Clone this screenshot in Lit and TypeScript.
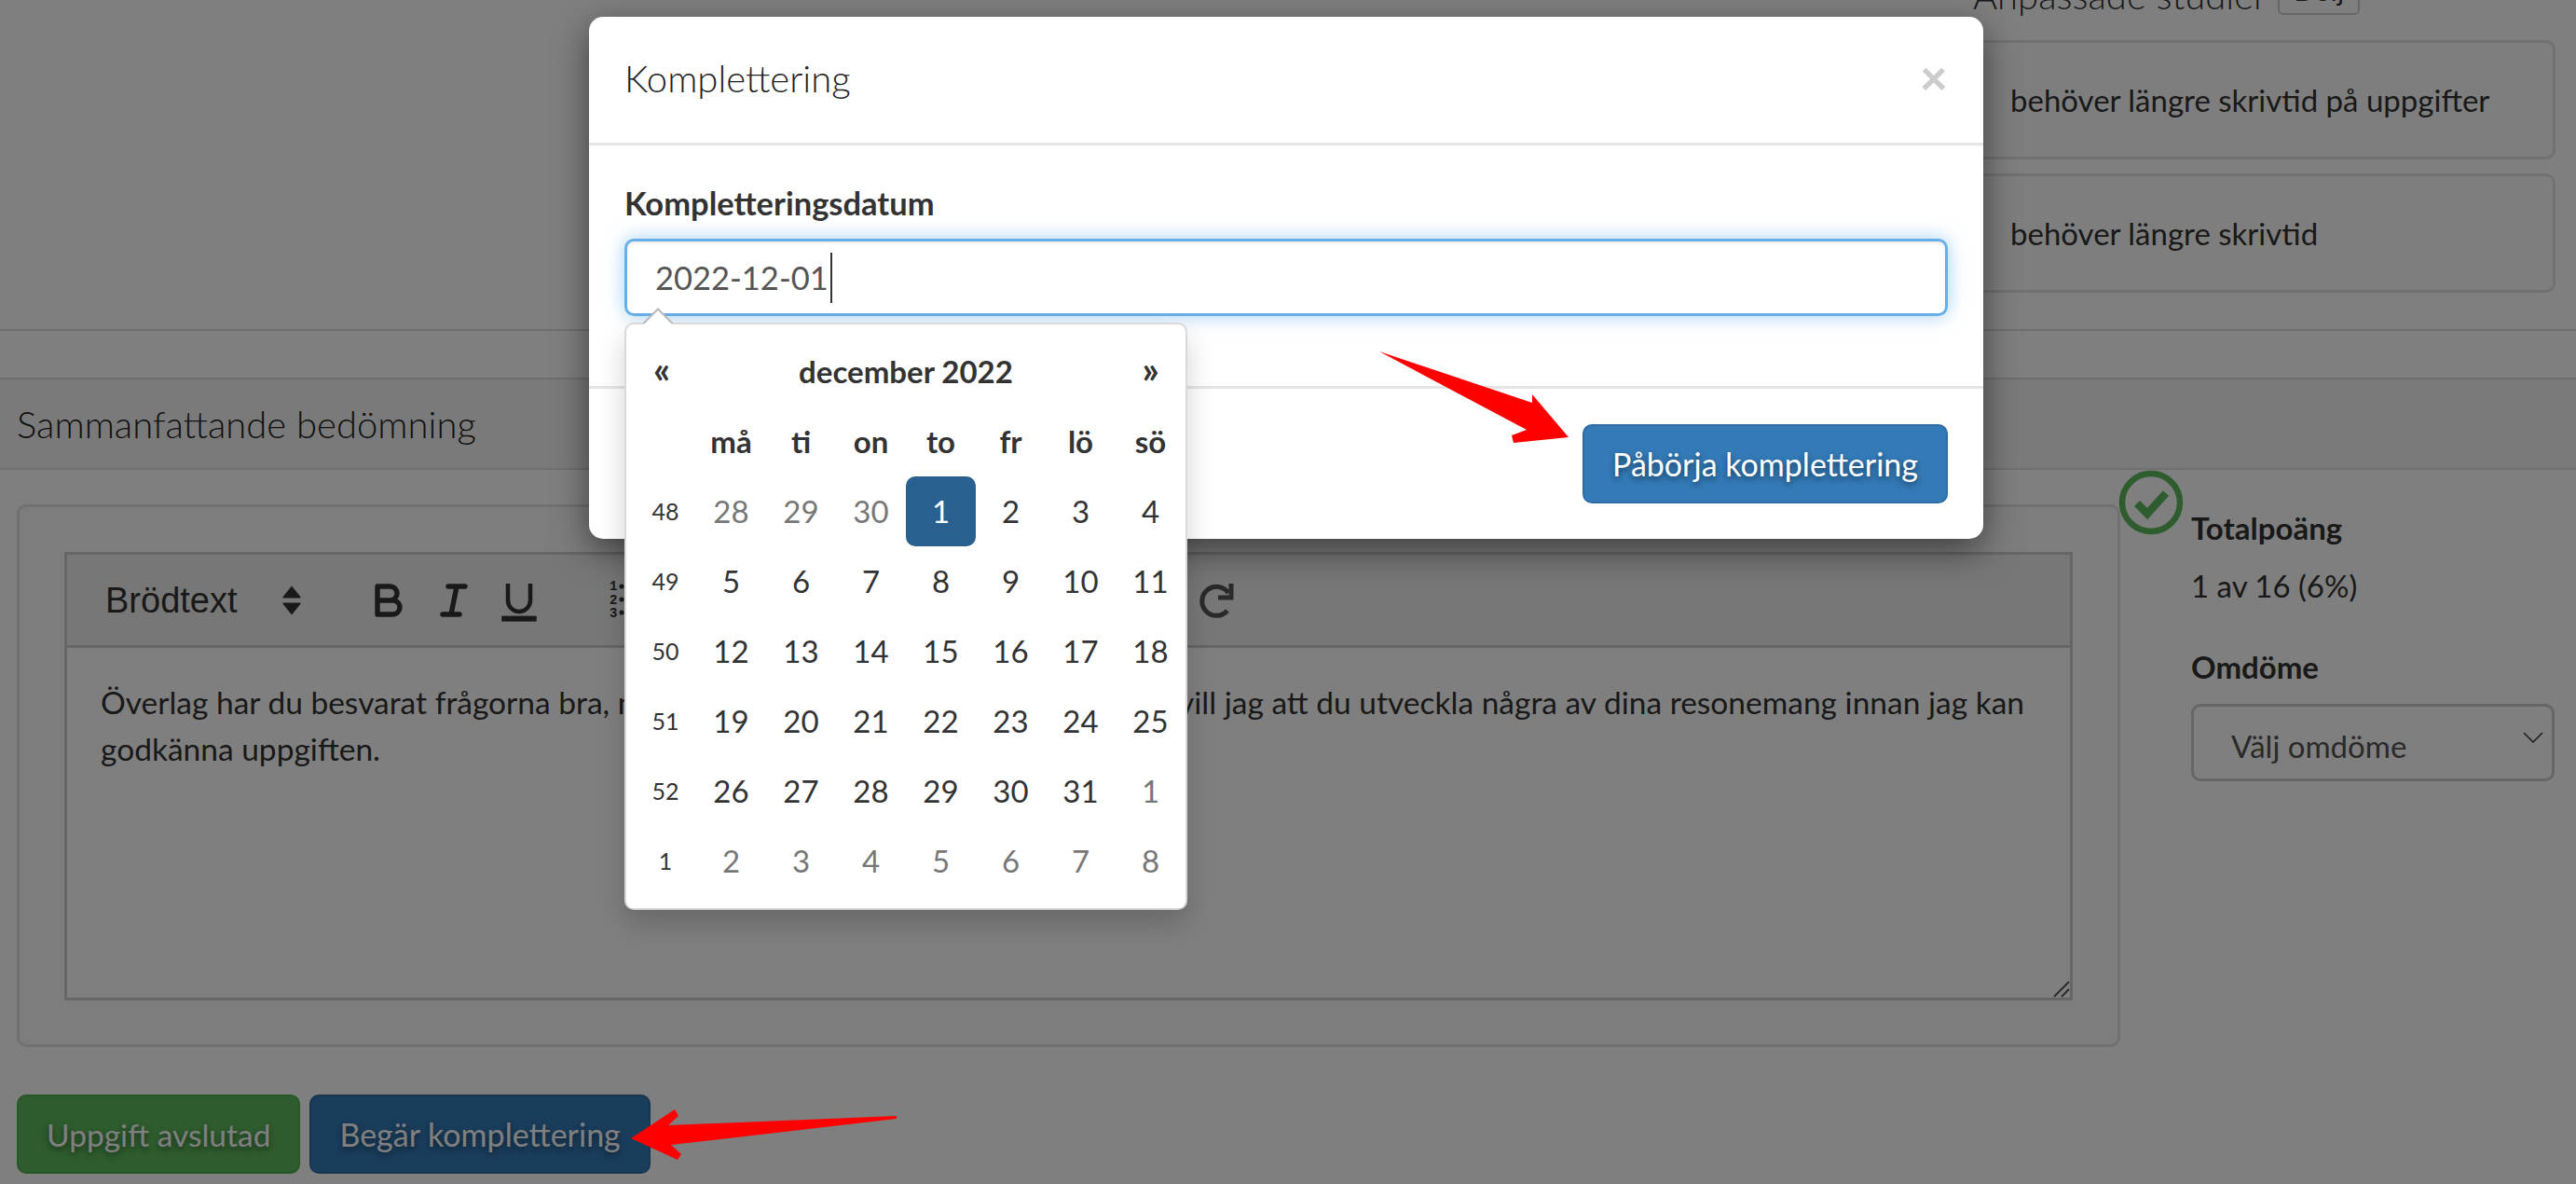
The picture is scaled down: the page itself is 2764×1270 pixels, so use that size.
import { LitElement, html, css, svg } from "lit";
import { customElement } from "lit/decorators.js";

const weeks: [number, number[]][] = [
  [48, [28, 29, 30, 1, 2, 3, 4]],
  [49, [5, 6, 7, 8, 9, 10, 11]],
  [50, [12, 13, 14, 15, 16, 17, 18]],
  [51, [19, 20, 21, 22, 23, 24, 25]],
  [52, [26, 27, 28, 29, 30, 31, 1]],
  [1, [2, 3, 4, 5, 6, 7, 8]],
];

@customElement("app-root")
export class AppRoot extends LitElement {
  static styles = css`
    :host {
      display: block;
      position: relative;
      width: 2764px;
      height: 1270px;
      overflow: hidden;
      background: #fff;
      font-family: "Lato", "Noto Sans", sans-serif;
      font-size: 33px;
      line-height: 50px;
      color: #333;
    }
    .top {
      height: 355px;
      display: flex;
      flex-direction: column;
      justify-content: flex-end;
      align-items: flex-end;
      padding: 0 22px 39px 0;
      box-sizing: border-box;
      border-bottom: 2px solid #ddd;
      overflow: hidden;
    }
    .studier-head {
      width: 625px;
      flex-shrink: 0;
      display: flex;
      align-items: flex-end;
      gap: 12px;
      margin-bottom: 23px;
      font-size: 40px;
      font-weight: 300;
      line-height: 50px;
    }
    .dolj {
      border: 2px solid #ccc;
      border-radius: 6px;
      font-size: 30px;
      font-weight: 400;
      line-height: 50px;
      padding: 0 15px;
      margin-bottom: 4px;
    }
    .card {
      width: 625px;
      height: 128px;
      flex-shrink: 0;
      box-sizing: border-box;
      border: 3px solid #e3e3e3;
      border-radius: 10px;
      background: #fdfdfd;
      display: flex;
      align-items: center;
      padding-left: 37px;
    }
    .card + .card { margin-top: 15px; }
    .gap-band { height: 52px; border-bottom: 2px solid #ddd; box-sizing: border-box; }
    .head-band {
      height: 97px;
      box-sizing: border-box;
      border-bottom: 2px solid #ddd;
      background: #f5f5f5;
      display: flex;
      align-items: center;
      padding-left: 18px;
      font-size: 40px;
      font-weight: 300;
      color: #222;
    }
    .main { display: flex; height: 620px; }
    .panel {
      margin: 37px 0 0 18px;
      width: 2257px;
      height: 582px;
      box-sizing: border-box;
      border: 3px solid #e3e3e3;
      border-radius: 10px;
      background: #fbfbfb;
      padding: 48px 48px;
    }
    .toolbar {
      height: 103px;
      box-sizing: border-box;
      border: 3px solid #ccc;
      background: #eeeeee;
      display: flex;
      align-items: center;
      padding-left: 41px;
      color: #333;
    }
    .picker {
      width: 269px;
      display: flex;
      align-items: center;
      font-family: "Liberation Sans", sans-serif;
      font-size: 38px;
      color: #333;
    }
    .picker svg { margin-left: auto; margin-right: 58px; }
    .tool { width: 70px; display: flex; justify-content: center; align-items: center; }
    .tool.list { margin-left: 37px; }
    .tool.redo { margin-left: 572px; }
    .editor {
      position: relative;
      height: 378px;
      box-sizing: border-box;
      border: 3px solid #ccc;
      border-top: 0;
      background: #fff;
      padding: 33px 36px;
      font-size: 33.500px;
    }
    .line { display: flex; justify-content: space-between; padding-right: 13px; white-space: nowrap; }
    .line .left { width: 563px; overflow: hidden; }
    .grip { position: absolute; right: 0; bottom: 0; }
    .side { position: relative; margin-left: 76px; width: 390px; padding-top: 37px; }
    .check { position: absolute; left: -78px; top: 0; }
    .b { font-weight: 700; }
    .val { margin-top: 12px; }
    .omd { margin-top: 37px; }
    .select {
      margin-top: 15px;
      height: 83px;
      box-sizing: border-box;
      border: 3px solid #ccc;
      border-radius: 10px;
      display: flex;
      align-items: center;
      justify-content: space-between;
      padding: 6px 9px 0 40px;
      color: #555;
    }
    .select svg { margin-top: -18px; }
    .actions { display: flex; gap: 10px; padding: 50px 0 0 18px; }
    .btn {
      height: 85px;
      box-sizing: border-box;
      border-radius: 10px;
      display: flex;
      align-items: center;
      padding: 0 30px;
      color: #fff;
      font-size: 34px;
      text-shadow: 0 3px 6px rgba(0, 0, 0, 0.5);
      white-space: nowrap;
    }
    .green { background: #5cb85c; border: 2px solid #4cae4c; font-size: 33.500px; }
    .blue { background: #337ab7; border: 2px solid #2e6da4; }
    .backdrop { position: absolute; inset: 0; background: rgba(0, 0, 0, 0.5); }
    .modal {
      position: absolute;
      left: 632px;
      top: 18px;
      width: 1496px;
      height: 560px;
      box-sizing: border-box;
      background: #fff;
      border-radius: 15px;
      box-shadow: 0 12px 37px rgba(0, 0, 0, 0.5);
    }
    .m-head {
      height: 138px;
      box-sizing: border-box;
      border-bottom: 3px solid #e5e5e5;
      display: flex;
      align-items: center;
      justify-content: space-between;
      padding: 0 38px;
    }
    .m-title { font-size: 40px; font-weight: 300; color: #222; margin-top: -3px; }
    .close { font-size: 52px; font-weight: 900; color: #ccc; line-height: 50px; margin-top: -8px; }
    .m-body { position: relative; height: 261px; box-sizing: border-box; padding: 37px 38px 0; border-bottom: 3px solid #e5e5e5; }
    .label { font-weight: 700; font-size: 34.500px; }
    .input {
      margin-top: 13px;
      height: 83px;
      box-sizing: border-box;
      border: 3px solid #66afe9;
      border-radius: 10px;
      box-shadow: 0 0 20px rgba(102, 175, 233, 0.6), inset 0 2px 3px rgba(0, 0, 0, 0.075);
      display: flex;
      align-items: center;
      padding-left: 30px;
      font-size: 34.500px;
      color: #555;
    }
    .caret { width: 2px; height: 54px; background: #333; margin-left: 2px; }
    .m-foot { display: flex; justify-content: space-between; padding: 38px 38px 0; }
    .default { width: 200px; background: #fff; border: 2px solid #ccc; }
    .dp {
      position: absolute;
      left: 38px;
      top: 190px;
      width: 604px;
      box-sizing: border-box;
      background: #fff;
      border: 2px solid rgba(0, 0, 0, 0.15);
      border-radius: 10px;
      box-shadow: 0 15px 30px rgba(0, 0, 0, 0.175);
      padding: 13px 0 13px 9px;
      display: grid;
      grid-template-columns: 66px repeat(7, 75px);
      grid-auto-rows: 75px;
      text-align: center;
      line-height: 75px;
      z-index: 2;
    }
    .dp::before {
      content: "";
      position: absolute;
      left: 17px;
      top: -18px;
      border: solid transparent;
      border-width: 0 17px 17px;
      border-bottom-color: #bbb;
    }
    .dp::after {
      content: "";
      position: absolute;
      left: 19px;
      top: -15px;
      border: solid transparent;
      border-width: 0 15px 15px;
      border-bottom-color: #fff;
    }
    .dp .title { grid-column: 2 / span 6; font-weight: 700; }
    .dp .nav { font-weight: 700; font-size: 40px; line-height: 71px; }
    .dp .nav.prev { padding-right: 8px; }
    .dp .wk { font-size: 25px; }
    .dp .old { color: #777; }
    .dp .act { background: #286090; color: #fff; border-radius: 10px; }
    .arrows { position: absolute; left: 0; top: 0; pointer-events: none; z-index: 5; }
  `;

  render() {
    return html`
      <div class="top">
        <div class="studier-head"><span>Anpassade studier</span><span class="dolj">Dölj</span></div>
        <div class="card">behöver längre skrivtid på uppgifter</div>
        <div class="card">behöver längre skrivtid</div>
      </div>
      <div class="gap-band"></div>
      <div class="head-band">Sammanfattande bedömning</div>
      <div class="main">
        <div class="panel">
          <div class="toolbar">
            <div class="picker">
              Brödtext
              <svg width="22" height="32" viewBox="0 0 20 28"><path d="M10 1l8 10H2zM10 27L2 17h16z" fill="#333" stroke="#333" stroke-linejoin="round" stroke-width="1.500"/></svg>
            </div>
            <div class="tool">
              <svg width="54" height="54" viewBox="0 0 18 18" fill="none" stroke="#333" stroke-width="1.800" stroke-linejoin="round"><path d="M5 4h4.500a2.500 2.500 0 0 1 0 5H5zM5 9h5.500a2.500 2.500 0 0 1 0 5H5z"/></svg>
            </div>
            <div class="tool">
              <svg width="54" height="54" viewBox="0 0 18 18" fill="none" stroke="#333" stroke-width="1.800" stroke-linecap="round"><path d="M7 4h6M5 14h6M8 14l2-10"/></svg>
            </div>
            <div class="tool">
              <svg width="54" height="54" viewBox="0 0 18 18" fill="none" stroke="#333" stroke-width="1.500"><path d="M5 3v6a4 4 0 0 0 8 0V3"/><rect x="3.500" y="15.300" width="11" height=".5" fill="#333"/></svg>
            </div>
            <div class="tool list">
              <svg width="20" height="46" viewBox="0 0 20 46" font-family="Liberation Mono" font-weight="700" font-size="14" fill="#333">
                <text x="0" y="12">1</text><text x="0" y="27">2</text><text x="0" y="41">3</text>
                <circle cx="13" cy="8" r="2.500"/><circle cx="13" cy="22" r="2.500"/><circle cx="13" cy="36" r="2.500"/>
              </svg>
            </div>
            <div class="tool redo">
              <svg width="38" height="38" viewBox="0 0 38 38" fill="none" stroke="#555" stroke-width="5"><path d="M30 30A15.500 15.500 0 1 1 31 11"/><path d="M34 1v15H20"/></svg>
            </div>
          </div>
          <div class="editor">
            <div class="line">
              <span class="left">Överlag har du besvarat frågorna bra, men</span>
              <span>vill jag att du utveckla några av dina resonemang innan jag kan</span>
            </div>
            <div>godkänna uppgiften.</div>
            <svg class="grip" width="20" height="20" viewBox="0 0 20 20" stroke="#555" stroke-width="2"><path d="M3 19L19 3M11 19l8-8"/></svg>
          </div>
        </div>
        <div class="side">
          <svg class="check" width="70" height="70" viewBox="0 0 70 70" fill="none">
            <circle cx="35" cy="35" r="31" stroke="#5cb85c" stroke-width="6.500"/>
            <path d="M20 36l11 11 20-22" stroke="#5cb85c" stroke-width="8.500"/>
          </svg>
          <div class="b">Totalpoäng</div>
          <div class="val">1 av 16 (6%)</div>
          <div class="b omd">Omdöme</div>
          <div class="select">
            <span>Välj omdöme</span>
            <svg width="22" height="14" viewBox="0 0 22 14" fill="none" stroke="#333" stroke-width="1.500"><path d="M1 2l10 10L21 2"/></svg>
          </div>
        </div>
      </div>
      <div class="actions">
        <div class="btn green">Uppgift avslutad</div>
        <div class="btn blue">Begär komplettering</div>
      </div>
      <div class="backdrop"></div>
      <div class="modal">
        <div class="m-head">
          <span class="m-title">Komplettering</span>
          <span class="close">×</span>
        </div>
        <div class="m-body">
          <div class="label">Kompletteringsdatum</div>
          <div class="input">2022-12-01<span class="caret"></span></div>
          <div class="dp">
            <div class="nav prev">«</div>
            <div class="title">december 2022</div>
            <div class="nav">»</div>
            <div></div>
            ${["må", "ti", "on", "to", "fr", "lö", "sö"].map((d) => html`<div class="b">${d}</div>`)}
            ${weeks.map(
              ([w, days], i) => html`<div class="wk">${w}</div>
                ${days.map((d, j) => {
                  const old = (i === 0 && j < 3) || (i === 4 && j === 6) || i === 5;
                  const act = i === 0 && j === 3;
                  return html`<div class="${old ? "old" : act ? "act" : ""}">${d}</div>`;
                })}`
            )}
          </div>
        </div>
        <div class="m-foot">
          <div class="btn default"></div>
          <div class="btn blue">Påbörja komplettering</div>
        </div>
      </div>
      <svg class="arrows" width="2764" height="1270" viewBox="0 0 2764 1270" fill="#f00">
        ${svg`<polygon points="1480,377 1644,432 1644,423 1683,469 1624,475 1622,467 1638,461"/>
        <polygon points="677,1221 724,1190 728,1197 717,1207 962,1197 962,1200 720,1228 731,1238 727,1244"/>`}
      </svg>
    `;
  }
}
